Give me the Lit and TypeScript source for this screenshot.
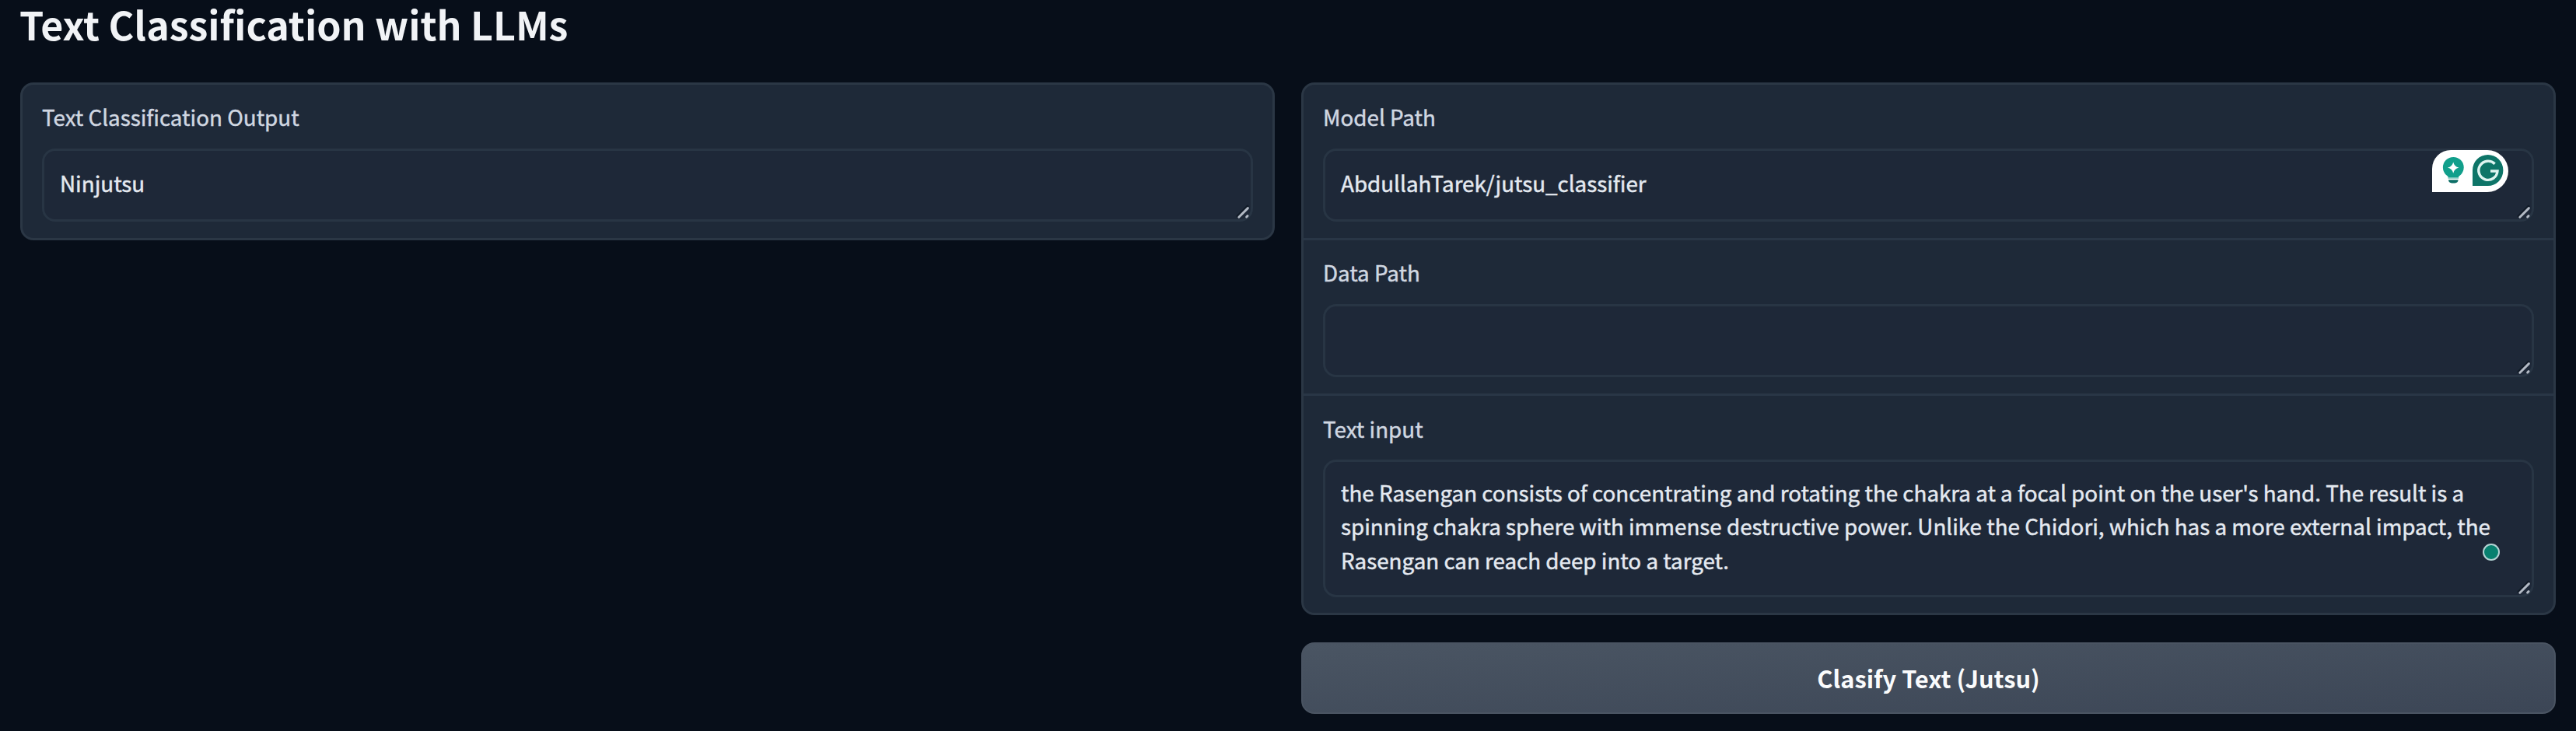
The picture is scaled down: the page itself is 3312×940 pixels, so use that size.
import { LitElement, html, css, svg } from "lit";
import { customElement, property } from "lit/decorators.js";

@customElement("text-field")
class TextField extends LitElement {
  @property() label = "";
  @property() value = "";
  @property({ type: Number }) lines = 1;

  static styles = css`
    :host {
      display: block;
      padding: 20px 25px 21px;
      -webkit-text-stroke: 0.45px currentColor;
    }
    .label {
      height: 43px;
      line-height: 43px;
      margin-bottom: 19px;
      color: #d0d7e1;
      white-space: nowrap;
    }
    .label.tall {
      padding-top: 1px;
      margin-bottom: 18px;
    }
    .box {
      position: relative;
      box-sizing: border-box;
      height: 94px;
      padding: 20px 20px 0;
      border: 3px solid #283544;
      border-radius: 17px;
      background: #1e2838;
      color: #e4e9f0;
      line-height: 43.4px;
      white-space: pre;
    }
    .box.tall {
      height: 177px;
      padding-top: 18px;
    }
    .grip {
      position: absolute;
      right: 0;
      bottom: 0;
      width: 20px;
      height: 20px;
    }
  `;

  render() {
    const size = this.lines > 1 ? "tall" : "";
    return html`
      <div class="label ${size}">${this.label}</div>
      <div class="box ${size}">${this.value}<svg class="grip" viewBox="0 0 20 20" fill="none" stroke-linecap="round">
          <path d="M3 16 16 3" stroke="#111a27" stroke-width="3" />
          <path d="M4.8 17.2 16.4 5.6M14.6 17l1.4-1.4" stroke="#b3bac5" stroke-width="2.9" />
        </svg><slot></slot></div>
    `;
  }
}

const bulb = svg`
  <circle cx="27.3" cy="22.3" r="13.4" fill="#119f8b" />
  <path d="M20.500 31h13.600v4h-13.600z" fill="#119f8b" />
  <path d="M20.500 35h13.600v1.800h-13.600z" fill="#7cc8bd" />
  <path d="M21 38.300h12.600a5 4.400 0 0 1-4.400 4.200h-3.800a5 4.400 0 0 1-4.400-4.200z" fill="#0c6e66" />
  <path d="M27.200 15.400q1.400 5.800 7.200 7.200q-5.800 1.400-7.200 7.200q-1.400-5.800-7.200-7.200q5.800-1.400 7.200-7.200z" fill="#fff" />`;

const gMark = svg`
  <path d="M52 46V26a19.700 20 0 1 1 19.700 20z" fill="#0e7568" />
  <path d="M80.600 17.800A12.100 12.100 0 1 0 84 27H75" fill="none" stroke="#dff5f1" stroke-width="3.400" />`;

@customElement("app-root")
class AppRoot extends LitElement {
  static styles = css`
    :host {
      display: block;
      box-sizing: border-box;
      height: 940px;
      padding: 0 26px;
      background: #070e19;
      font: 27.78px "Noto Sans CJK SC", "Open Sans", sans-serif;
    }
    h1 {
      margin: 0 0 0 -1px;
      height: 106px;
      font-size: 50.1px;
      line-height: 60px;
      font-weight: 700;
      color: #f1f3f6;
      white-space: nowrap;
    }
    .columns {
      display: grid;
      grid-template-columns: 1612.5px 1613px;
      column-gap: 34.5px;
      align-items: start;
    }
    .card {
      border: 3px solid #2b3745;
      border-radius: 17px;
      background: #1e2938;
    }
    .card text-field + text-field {
      border-top: 3px solid #293646;
    }
    .card text-field.last {
      padding-bottom: 20px;
    }
    .action {
      display: flex;
      align-items: center;
      justify-content: center;
      box-sizing: border-box;
      width: 100%;
      height: 92px;
      margin: 35px 0 0;
      padding: 0;
      border: 2px solid #4a5462;
      border-radius: 17px;
      background: linear-gradient(to bottom right, #4a5563, #3c4656);
      color: #fafbfc;
      font: 700 30.8px/46px "Noto Sans CJK SC", "Open Sans", sans-serif;
    }
    .assist {
      position: absolute;
      top: -1px;
      right: 30px;
      width: 98px;
      height: 54px;
      border-radius: 24px 27px 27px 0;
      background: #fff;
    }
    .status {
      position: absolute;
      top: 105px;
      right: 41px;
      box-sizing: border-box;
      width: 22px;
      height: 22px;
      border: 2.5px solid #b4d3d4;
      border-radius: 50%;
      background: #08806f;
    }
  `;

  render() {
    return html`
      <h1>Text Classification with LLMs</h1>
      <div class="columns">
        <section class="card">
          <text-field label="Text Classification Output" value="Ninjutsu"></text-field>
        </section>
        <div>
          <section class="card">
            <text-field label="Model Path" value="AbdullahTarek/jutsu_classifier">
              <svg class="assist" viewBox="0 0 98 54">${bulb}${gMark}</svg>
            </text-field>
            <text-field label="Data Path"></text-field>
            <text-field
              class="last"
              label="Text input"
              lines="3"
              value=${[
                "the Rasengan consists of concentrating and rotating the chakra at a focal point on the user's hand. The result is a",
                "spinning chakra sphere with immense destructive power. Unlike the Chidori, which has a more external impact, the",
                "Rasengan can reach deep into a target.",
              ].join("\n")}
            >
              <span class="status"></span>
            </text-field>
          </section>
          <button class="action">Clasify Text (Jutsu)</button>
        </div>
      </div>
    `;
  }
}
